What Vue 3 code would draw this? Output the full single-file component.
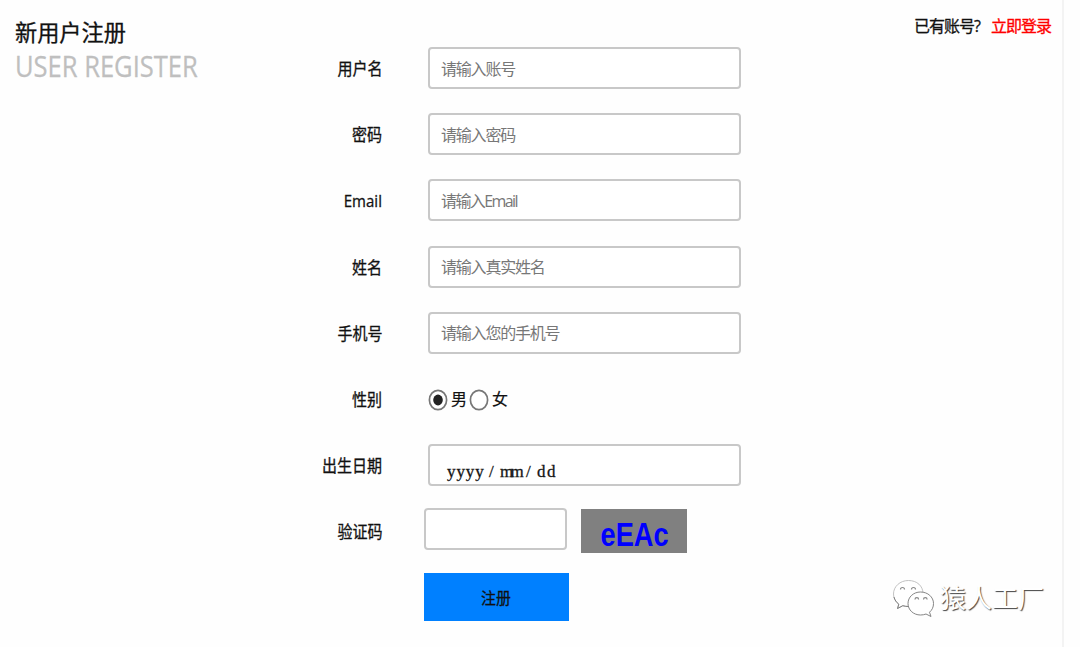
<template>
  <div class="register-page">
    <main class="content">
      <div class="heading">
        <h1>新用户注册</h1>
        <p class="subtitle"><span>USER REGISTER</span></p>
      </div>

      <form class="register-form" @submit.prevent>
        <div v-for="field in fields" :key="field.name" class="form-row">
          <label :for="field.name"><span>{{ field.label }}</span></label>
          <input :id="field.name" v-model="form[field.name]" class="text-input" :class="field.name" :type="field.type" :placeholder="field.placeholder" />
        </div>
        <div class="form-row">
          <label><span>性别</span></label>
          <div class="radios">
            <button
              v-for="g in genders"
              :key="g"
              type="button"
              class="radio"
              @click="form.gender = g"
            >
              <svg width="20" height="22" viewBox="0 0 20 22">
                <ellipse cx="10" cy="11" rx="8.6" ry="9.7" fill="#fff" stroke="#777" stroke-width="1.7" />
                <ellipse v-if="form.gender === g" cx="10" cy="11" rx="4.8" ry="5.4" fill="#222" />
              </svg>
              <span>{{ g }}</span>
            </button>
          </div>
        </div>
        <div class="form-row">
          <label><span>出生日期</span></label>
          <div class="text-input date-input">
            <span class="year">yyyy</span><span class="slash">/</span><span class="month">mm</span><span class="slash">/</span><span class="day">dd</span>
          </div>
        </div>
        <div class="form-row code-row">
          <label for="code"><span>验证码</span></label>
          <input id="code" v-model="form.code" class="text-input code-input" />
          <div class="captcha"><span>eEAc</span></div>
        </div>
        <button type="submit" class="submit-btn"><span>注册</span></button>
      </form>

      <div class="login-tip">
        <span class="tip">已有账号?</span>
        <a href="#">立即登录</a>
      </div>
    </main>

    <div class="watermark">
      <svg width="44" height="40" viewBox="0 0 44 40">
        <g fill="#fff" stroke-linejoin="round" stroke-width="0.9">
          <path stroke="#bbb" d="M16.5 2.5C8 2.5 1.500 8.500 1.500 16c0 4.500 2 7.800 5.300 10.200L5.500 30.500l5.300-2.800c2 .6 3.700.8 5.700.8 8 0 14.500-5.500 14.500-13S25 2.500 16.500 2.500z" />
          <path fill="none" stroke="#777" d="M2 19c.8 3 2.400 5.400 4.800 7.200L5.500 30.500l5.300-2.800c2 .6 3.700.8 5.700.8" />
          <path stroke="#777" d="M28.500 14C21.500 14 16 19 16 25.500S21.500 37 28.500 37c2 0 3.800-.3 5.500-1l5 2.500-1.500-4.300c2.700-2.200 4-5.200 4-8.700C41.500 19 35.800 14 28.500 14z" />
        </g>
        <g fill="none" stroke="#888" stroke-width="1.2">
          <path d="M8.500 11.500a2 2 0 0 1 4 0M19.500 11.500a2 2 0 0 1 4 0M23 21.500a1.800 1.800 0 0 1 3.600 0M31.500 21.500a1.800 1.800 0 0 1 3.600 0" />
        </g>
      </svg>
      <span>猿人工厂</span>
    </div>
  </div>
</template>

<script setup>
import { reactive } from 'vue'

const fields = [
  { name: 'username', label: '用户名', type: 'text', placeholder: '请输入账号' },
  { name: 'password', label: '密码', type: 'password', placeholder: '请输入密码' },
  { name: 'email', label: 'Email', type: 'email', placeholder: '请输入Email' },
  { name: 'realname', label: '姓名', type: 'text', placeholder: '请输入真实姓名' },
  { name: 'phone', label: '手机号', type: 'text', placeholder: '请输入您的手机号' },
]
const genders = ['男', '女']

const form = reactive({
  username: '',
  password: '',
  email: '',
  realname: '',
  phone: '',
  gender: '男',
  code: '',
})
</script>

<style>
body { margin: 0; background: #fefefe; }
</style>

<style scoped>
.register-page {
  position: relative;
  width: 1080px;
  height: 647px;
  overflow: hidden;
  font-family: "Open Sans", "Noto Sans CJK SC", sans-serif;
  font-size: 16px;
  color: #111;
}
.content {
  box-sizing: border-box;
  display: flex;
  width: 1064px;
  height: 647px;
  border-right: 2px solid #f3f3f3;
}
.heading { width: 282px; padding: 17px 0 0 15px; box-sizing: border-box; }
h1 { margin: 0; font-size: 22.2px; line-height: 32px; font-weight: 400; color: #111; -webkit-text-stroke: 0.3px #111; }
.subtitle { margin: 0; font-size: 29.5px; line-height: 34px; color: #bfbfbf; white-space: nowrap; }
.subtitle span { display: inline-block; transform: scaleX(0.865); transform-origin: left; -webkit-text-stroke: 0.3px #bfbfbf; }
.register-form { width: 460px; padding-top: 35px; }
.form-row { display: flex; align-items: center; height: 66.2px; }
label { width: 100px; margin: 2px 46px 0 0; text-align: right; white-space: nowrap; line-height: 24px; }
label span {
  display: inline-block;
  font-size: 16.5px;
  transform: scaleX(0.91);
  transform-origin: right;
  -webkit-text-stroke: 0.3px #111;
}
.text-input {
  box-sizing: border-box;
  width: 313px;
  height: 42px;
  padding: 1px 11px 0;
  border: 2px solid #c8c8c8;
  border-radius: 4px;
  background: #fff;
  font: inherit;
  letter-spacing: -1.2px;
  outline: none;
}
.text-input::placeholder { color: #777; opacity: 1; }
.text-input.email { letter-spacing: -1.6px; }
.radios { display: flex; margin-top: 2px; }
.radio { display: flex; align-items: center; width: 41px; padding: 0; border: 0; background: none; font: inherit; color: #111; }
.radio span { margin: -4px 0 0 3px; -webkit-text-stroke: 0.2px #111; }
.radio svg { flex: none; }
.date-input {
  display: flex;
  padding: 14px 0 0 17px;
  font-family: "Liberation Serif", serif;
  font-size: 17px;
  line-height: 24px;
  letter-spacing: 0;
  -webkit-text-stroke: 0.3px #222;
}
.year { width: 42px; letter-spacing: 0.9px; }
.slash { width: 11px; }
.month { width: 26px; letter-spacing: -2.6px; }
.day { letter-spacing: 1.5px; }
.code-row label { margin-right: 42px; }
.code-input { width: 143px; margin-top: -4px; }
.captcha {
  display: flex;
  justify-content: center;
  width: 106px;
  height: 44px;
  margin: 0 0 0 14px;
  background: #808080;
  color: #00f;
  font: bold 34px/51px "Liberation Sans", sans-serif;
}
.captcha span { transform: translateX(1px) scaleX(0.8); }
.submit-btn {
  display: block;
  width: 145px;
  height: 48px;
  margin: 8px 0 0 142px;
  padding: 0;
  border: 0;
  background: #0080ff;
  font: inherit;
  color: #111;
}
.submit-btn span { display: inline-block; transform: scaleX(0.93); -webkit-text-stroke: 0.3px #111; }
.login-tip { display: flex; flex: 1; padding: 14px 0 0 172px; line-height: 24px; white-space: nowrap; letter-spacing: -1px; }
.login-tip .tip { width: 77px; -webkit-text-stroke: 0.3px #111; }
.login-tip a { color: #f00; text-decoration: none; -webkit-text-stroke: 0.3px #f00; }
.watermark {
  position: absolute;
  left: 892px;
  top: 578px;
  display: flex;
  align-items: center;
  gap: 4px;
  color: #fff;
  font-size: 26px;
  line-height: 40px;
  text-shadow: 1px 1px 1px #444;
  white-space: nowrap;
}
</style>
